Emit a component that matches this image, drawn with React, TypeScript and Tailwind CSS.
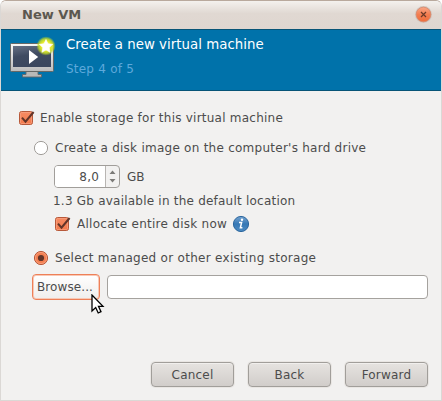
import type { ReactNode } from "react";

function MonitorIcon() {
  return (
    <svg width="48" height="46" viewBox="8 35 48 46" className="block">
      <defs>
        <linearGradient id="frame" x1="0" y1="0" x2="0" y2="1">
          <stop offset="0" stopColor="#f8f7f6" />
          <stop offset="1" stopColor="#bcbcbc" />
        </linearGradient>
        <linearGradient id="screen" x1="0" y1="0" x2="0.3" y2="1">
          <stop offset="0" stopColor="#667084" />
          <stop offset="0.5" stopColor="#3f4b61" />
          <stop offset="1" stopColor="#3b475e" />
        </linearGradient>
        <radialGradient id="glow">
          <stop offset="0" stopColor="#ffffc0" />
          <stop offset="0.5" stopColor="#e6eb2c" />
          <stop offset="0.75" stopColor="#c6dc28" stopOpacity="0.85" />
          <stop offset="1" stopColor="#b8d820" stopOpacity="0" />
        </radialGradient>
      </defs>
      <path d="M26 71.500h12v3h3.500v2.500H22.500v-2.500H26z" fill="#b9b9b8" stroke="#666" strokeWidth="0.9" />
      <rect x="10.500" y="43.500" width="43" height="28" rx="1" fill="url(#frame)" stroke="#666866" />
      <rect x="13" y="46" width="38" height="21" fill="url(#screen)" />
      <path d="M29 50l9.200 7-9.200 7z" fill="#fff" />
      <circle cx="46" cy="46" r="9.700" fill="url(#glow)" />
      <path d="M46 39.500l2 4.300 4.700.5-3.500 3.300.9 4.700-4.100-2.300-4.100 2.300.9-4.700-3.500-3.300 4.700-.5z" fill="#fff" stroke="#fff" strokeWidth="0.6" />
    </svg>
  );
}

function CloseIcon() {
  return (
    <svg width="18" height="18" viewBox="0.5 0.5 18 18" className="block">
      <defs>
        <linearGradient id="close" x1="0" y1="0" x2="0" y2="1">
          <stop offset="0" stopColor="#f9a787" />
          <stop offset="0.5" stopColor="#f37d50" />
          <stop offset="1" stopColor="#ef6d3b" />
        </linearGradient>
      </defs>
      <circle cx="9" cy="9" r="8.500" fill="#cfc3bc" />
      <circle cx="9" cy="9" r="7.300" fill="url(#close)" stroke="#d98668" strokeWidth="0.8" />
      <path d="M6.500 6.500l5 5m0-5l-5 5" stroke="#6b3a28" strokeWidth="1.200" />
    </svg>
  );
}

function CheckBox() {
  return (
    <svg width="18" height="18" viewBox="0 0 18 18" className="block shrink-0">
      <defs>
        <linearGradient id="check" x1="0" y1="0" x2="0" y2="1">
          <stop offset="0" stopColor="#f68c64" />
          <stop offset="1" stopColor="#f37a4c" />
        </linearGradient>
      </defs>
      <rect x="1.500" y="2.500" width="13" height="13" rx="2" fill="url(#check)" stroke="#b7593a" />
      <rect x="2.500" y="3.500" width="11" height="11" rx="1" fill="none" stroke="#f9a383" strokeOpacity="0.7" />
      <path d="M4 8.700l3.500 4L15.600 3" fill="none" stroke="#633529" strokeWidth="2" />
    </svg>
  );
}

function Radio({ checked = false }: { checked?: boolean }) {
  return (
    <svg width="16" height="16" viewBox="0 0 16 16" className="block shrink-0">
      <circle cx="8" cy="8" r="6.600" fill={checked ? "#f47f51" : "#fff"} stroke={checked ? "#b7593a" : "#a09d99"} />
      {checked && <circle cx="8" cy="8" r="5.600" fill="none" stroke="#f9a383" strokeWidth="0.8" />}
      {checked && <circle cx="8" cy="8" r="3.100" fill="#633529" />}
    </svg>
  );
}

function InfoIcon() {
  return (
    <svg width="18" height="18" viewBox="0 0 18 18" className="block shrink-0">
      <defs>
        <linearGradient id="info" x1="0" y1="0" x2="0" y2="1">
          <stop offset="0" stopColor="#76a4d0" />
          <stop offset="0.5" stopColor="#3678b5" />
          <stop offset="1" stopColor="#4d8bc3" />
        </linearGradient>
      </defs>
      <circle cx="9" cy="9" r="7.600" fill="url(#info)" stroke="#2c669d" />
      <circle cx="10" cy="4.800" r="1.200" fill="#fff" />
      <path d="M7 7.500h2.600L8.400 12.700h2" fill="none" stroke="#fff" strokeWidth="1.500" />
    </svg>
  );
}

function Cursor() {
  return (
    <svg width="14" height="20" viewBox="0 0 14 20" className="absolute left-[59px] top-[20px]">
      <path d="M1 1v16l3.700-3.500L7.200 19l2.800-1.300L7.500 12.400H12z" fill="#fff" stroke="#000" strokeWidth="1.300" />
    </svg>
  );
}

function ActionButton({ children }: { children: ReactNode }) {
  return (
    <button className="h-[25px] w-[83px] rounded-[4px] border border-[#a19e9a] bg-linear-to-b from-[#e6e3e0] to-[#d1cdca] text-center leading-[22px] tracking-[0.2px] shadow-[inset_0_1px_0_#f1efed,0_0_0_1px_#e9e6e3]">
      {children}
    </button>
  );
}

export default function App() {
  return (
    <div className="h-[401px] w-[442px] overflow-hidden bg-white font-['DejaVu_Sans',sans-serif] text-[12px] leading-[16px] text-[#4c4c4c]">
      <div className="flex h-full flex-col overflow-hidden rounded-t-[6px] border border-[#dbd8d5] border-t-[#b9a99d] bg-[#f2f1f0]">
        <header className="flex h-[28px] shrink-0 items-center justify-between bg-linear-to-b from-[#f4f1ee] via-[#e0d8d2] via-45% to-[#dfd6d0] pl-[21px] pr-[8px]">
          <h1 className="text-[13px] font-bold text-[#5c574f]">New VM</h1>
          <CloseIcon />
        </header>
        <section className="flex h-[62px] shrink-0 border-y border-[#075477] bg-[#0072aa] pl-[7px]">
          <div className="pt-[5px]"><MonitorIcon /></div>
          <div className="pl-[10px] pt-[7px]">
            <h2 className="whitespace-nowrap text-[13.333px] tracking-[0.03px] text-white">Create a new virtual machine</h2>
            <p className="mt-[8px] tracking-[0.22px] text-[#5da9db]">Step 4 of 5</p>
          </div>
        </section>
        <main className="whitespace-nowrap pl-[17px] pr-[13px] pt-[18px]">
          <label className="flex h-[18px] items-center gap-[4px] tracking-[0.235px]"><CheckBox />Enable storage for this virtual machine</label>
          <div className="pl-[15px]">
            <label className="mt-[12px] flex h-[18px] items-center gap-[6px] tracking-[0.255px]"><Radio />Create a disk image on the computer's hard drive</label>
            <div className="pl-[21px]">
              <div className="mt-[8px] flex h-[23px] items-center gap-[7px]">
                <div className="flex h-[23px] w-[66px] overflow-hidden rounded-[4px] border border-[#a19e9a] bg-[#f2f1f0]">
                  <span className="w-[51px] border-r border-[#b8b5b2] bg-white pr-[6px] text-right leading-[22px] tracking-[0.2px]">8,0</span>
                  <svg width="13" height="21" viewBox="0 0 13 21"><path d="M3.500 8h6l-3-3.500zM3.500 13h6l-3 3.500z" fill="#7c7b78" /></svg>
                </div>
                GB
              </div>
              <p className="-ml-px mt-[5px] tracking-[0.22px]">1.3 Gb available in the default location</p>
              <div className="mt-[6px] flex h-[18px] items-center"><CheckBox /><span className="ml-[5px] tracking-[0.27px]">Allocate entire disk now</span><span className="ml-[5px]"><InfoIcon /></span></div>
            </div>
            <label className="mt-[16px] flex h-[18px] items-center gap-[6px] tracking-[0.29px]"><Radio checked />Select managed or other existing storage</label>
            <div className="-ml-px mt-[7px] flex items-center gap-[7px]">
              <div className="relative shrink-0">
                <button className="h-[26px] w-[68px] rounded-[4px] border border-[#ee8058] bg-linear-to-b from-white to-[#f0eeec] pr-[2px] leading-[24px] tracking-[0.1px] shadow-[inset_0_0_0_1px_#f8c9b6]">Browse...</button>
                <Cursor />
              </div>
              <input aria-label="Storage location" className="h-[24px] min-w-0 flex-1 rounded-[4px] border border-[#a5a29e] bg-white outline-none" />
            </div>
          </div>
        </main>
        <footer className="mb-[13px] mt-auto flex justify-end gap-[14px] pr-[13px]">
          <ActionButton>Cancel</ActionButton>
          <ActionButton>Back</ActionButton>
          <ActionButton>Forward</ActionButton>
        </footer>
      </div>
    </div>
  );
}
